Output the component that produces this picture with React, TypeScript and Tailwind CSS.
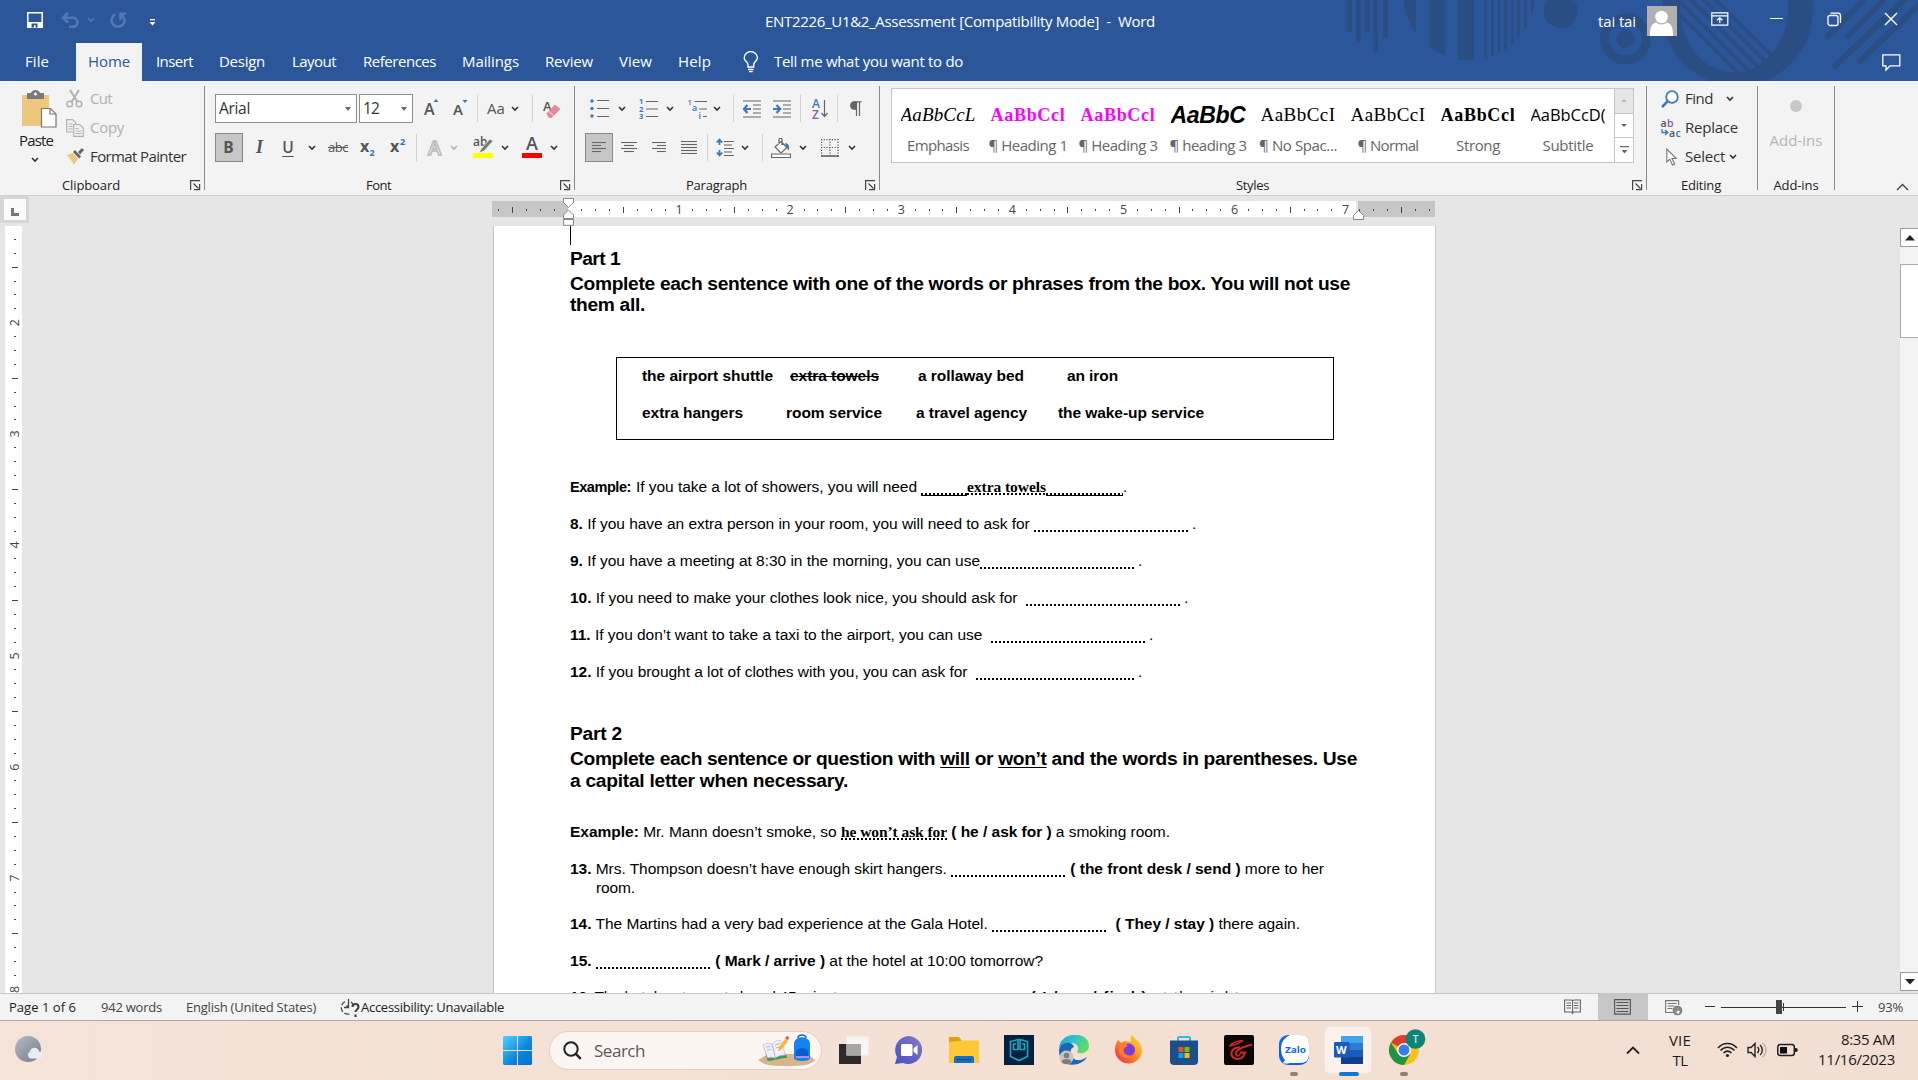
import { useLayoutEffect, useRef } from "react";
import type { ReactNode } from "react";

/** Text run whose letter spacing is adjusted so that it fills exactly `w` pixels. */
function Fit({ w, className = "", children }: { w: number; className?: string; children: ReactNode }) {
  const ref = useRef<HTMLSpanElement>(null);
  useLayoutEffect(() => {
    const el = ref.current;
    if (!el) return;
    el.style.letterSpacing = "0px";
    const natural = el.getBoundingClientRect().width;
    const count = (el.textContent || " ").length;
    el.style.letterSpacing = `${(w - natural) / count}px`;
  }, [w, children]);
  return (
    <span className={`inline-block shrink-0 whitespace-pre ${className}`} style={{ width: w }}>
      <span ref={ref}>{children}</span>
    </span>
  );
}

const Chev = ({ color = "#333" }: { color?: string }) => (
  <svg width="8" height="6" viewBox="0 0 8 6" fill="none" stroke={color} strokeWidth="1.6">
    <path d="M1 1l3 3 3-3" />
  </svg>
);

const Slot = ({ className, children }: { className: string; children: ReactNode }) => (
  <div className={`flex h-full shrink-0 items-center justify-center ${className}`}>{children}</div>
);

const Sep = () => <div className="h-[27px] w-px bg-[#d0d0d0]" />;
const GroupLine = () => <div className="mt-[5px] h-[104px] w-px shrink-0 bg-[#8a8a8a]" />;

const Launcher = () => (
  <svg width="11" height="11" viewBox="0 0 11 11" fill="none" stroke="#444" strokeWidth="1.2">
    <path d="M.6 10V.6H10M3.5 3.5l5 5M9.6 4v5.6H4" />
  </svg>
);

/* ---------- title bar ---------- */

function TitleArt() {
  return (
    <svg className="absolute right-0 top-0" width="598" height="81" viewBox="1320 0 598 81">
      <defs>
        <clipPath id="c1"><circle cx="1469" cy="-6" r="66" /></clipPath>
        <clipPath id="c2"><circle cx="1735" cy="8" r="66" /></clipPath>
      </defs>
      <g fill="#2a4d84">
        <path d="M1347 0h5v32h-5zM1356 0h5v41h-5zM1365 0h5v32h-5zM1373 0h5v52h-5zM1383 0h5v38h-5z" />
        <path clipPath="url(#c1)" d="M1400 0h16v80h-16zM1429 0h16v80h-16zM1458 0h16v80h-16zM1484 0h3v80h-3zM1491 0h2.500v80h-2.500zM1498 0h2v80h-2zM1504 0h3v80h-3zM1511 0h2.500v80h-2.500zM1517 0h3v80h-3zM1524 0h3v80h-3zM1531 0h3v80h-3z" />
        <circle cx="1560.700" cy="11" r="17" />
        <circle cx="1625.500" cy="39" r="9" />
      </g>
      <circle cx="1625.500" cy="39" r="21" fill="none" stroke="#2a4d84" strokeWidth="9" />
      <path fill="#2a4d84" fillRule="evenodd" d="M1813 10a75.500 76 0 1 1-151 0a75.500 76 0 1 1 151 0zM1788 8a52 62 0 1 0-108 0a52 62 0 1 0 108 0z" />
      <g clipPath="url(#c2)" stroke="#2a4d84" strokeWidth="4">
        <path d="M1670 -8l84 84M1685 -6l84 84M1699 -5l84 84M1711 -5l84 84M1657 -8l84 84" />
      </g>
      <g stroke="#2a4d84" strokeWidth="6">
        <path d="M1864 0l-38 38M1884 0l-38 38M1906 -2l-73 70M1928 -4l-70 67" />
      </g>
    </svg>
  );
}

function TitleBar() {
  return (
    <div className="flex h-[43px] items-start text-[15px] leading-[20px] text-white">
      <div className="flex h-[43px] w-[765px] pt-[12px]">
        <svg className="ml-[27px]" width="16" height="16" viewBox="0 0 16 16" fill="none" stroke="#fff" strokeWidth="1.500">
          <path d="M.8.8h14.400v14.400H.8z" />
          <path d="M1 10h14v5.500H1z" fill="#fff" stroke="none" />
          <path d="M4.500 11.500h6v4h-2v-2.500h-1.500v2.500h-2.500z" fill="#2b579a" stroke="none" />
        </svg>
        <svg className="ml-[18px]" width="19" height="17" viewBox="0 0 19 17" fill="none" stroke="#5178b3" strokeWidth="2.600">
          <path d="M7 1L2 5.800 7 10.500M2 5.800h10a4.500 4.500 0 0 1 0 9H8" />
        </svg>
        <div className="ml-[7px] mt-[5px]"><Chev color="#5178b3" /></div>
        <svg className="ml-[14px]" width="18" height="17" viewBox="0 0 18 17" fill="none" stroke="#5178b3" strokeWidth="2.600">
          <path d="M6 2.500a6.500 6.500 0 1 0 6 0M11.500 8V1.800H17" />
        </svg>
        <svg className="ml-[22px] mt-[7px]" width="7" height="7" viewBox="0 0 7 7" fill="#fff">
          <path d="M1 0h5v1.200H1zM.5 3h6L3.500 6.500z" />
        </svg>
      </div>
      <Fit w={390} className="mt-[11px]">{"ENT2226_U1&2_Assessment [Compatibility Mode]  -  Word"}</Fit>
      <Fit w={38} className="ml-[443px] mt-[11px]">tai tai</Fit>
      <svg className="ml-[11px] mt-[6px] bg-[#b0b0b0]" width="30" height="30" viewBox="0 0 30 30" fill="#fff">
        <circle cx="14.500" cy="11" r="6.300" />
        <path d="M3 30c0-8 1-12 6-13.500 3 2.500 8 2.500 11 0 5 1.500 6 5.500 6 13.500z" />
      </svg>
      <svg className="ml-[34px] mt-[12px]" width="18" height="14" viewBox="0 0 18 14" fill="none" stroke="#fff" strokeWidth="1.200">
        <path d="M.8.8h16v12.400H.8zM.8 3.800h16M8.800 11V6M6 8.300L8.800 5.800l2.700 2.500" />
      </svg>
      <div className="ml-[41px] mt-[18px] h-px w-[13px] bg-white" />
      <svg className="ml-[44px] mt-[12px]" width="15" height="15" viewBox="0 0 15 15" fill="none" stroke="#fff" strokeWidth="1.300">
        <rect x="1" y="3.500" width="10" height="10" rx="2" />
        <path d="M3.500 1.200H11a2.500 2.500 0 0 1 2.500 2.500V11" />
      </svg>
      <svg className="ml-[42px] mt-[12px]" width="14" height="14" viewBox="0 0 14 14" stroke="#fff" strokeWidth="1.400">
        <path d="M1 1l12 12M13 1L1 13" />
      </svg>
    </div>
  );
}

function Tabs() {
  return (
    <div className="relative flex h-[38px] text-[15px] leading-[36px] text-white">
      <Fit w={24} className="ml-[25px]">File</Fit>
      <div className="ml-[27px] w-[66px] bg-[#f3f3f3] pl-[12px] text-[#2b579a]"><Fit w={42}>Home</Fit></div>
      <Fit w={37} className="ml-[14px]">Insert</Fit>
      <Fit w={46} className="ml-[26px]">Design</Fit>
      <Fit w={44} className="ml-[27px]">Layout</Fit>
      <Fit w={73} className="ml-[27px]">References</Fit>
      <Fit w={57} className="ml-[26px]">Mailings</Fit>
      <Fit w={48} className="ml-[26px]">Review</Fit>
      <Fit w={33} className="ml-[26px]">View</Fit>
      <Fit w={33} className="ml-[26px]">Help</Fit>
      <svg className="ml-[32px] mt-[8px]" width="16" height="22" viewBox="0 0 16 22" fill="none" stroke="#fff" strokeWidth="1.400">
        <path d="M5 16v-2.500C5 11 1.200 10 1.200 7a6.500 6.300 0 0 1 13.200 0c0 3-3.700 4-3.700 6.500V16zM5 18.500h5.700M6 20.600h3.700" />
      </svg>
      <Fit w={189} className="ml-[15px]">Tell me what you want to do</Fit>
      <svg className="ml-auto mr-[17px] mt-[11px]" width="19" height="18" viewBox="0 0 19 18" fill="none" stroke="#fff" strokeWidth="1.300">
        <path d="M.8.8h17v11H8l-4 4.200v-4.200H.8z" />
      </svg>
    </div>
  );
}

/* ---------- ribbon ---------- */

function Clipboard() {
  return (
    <div className="flex w-[204px] shrink-0 flex-col">
      <div className="flex h-[91px]">
        <div className="flex w-[66px] flex-col items-start pl-[19px] pt-[9px]">
          <svg className="ml-[3px]" width="35" height="38" viewBox="0 0 35 38">
            <path d="M0 5h27v31H0z" fill="#eec77f" />
            <path d="M5 3h4c1-4 8-4 9 0h4v6H5z" fill="#7a7a7a" />
            <circle cx="13.500" cy="4" r="1.500" fill="#fff" />
            <path d="M19.500 18.500h9l5.500 5.500v13H19.500z" fill="#fff" stroke="#777" strokeWidth="1.200" />
            <path d="M28 18.500V24h6" fill="none" stroke="#777" strokeWidth="1.200" />
          </svg>
          <Fit w={34} className="mt-[2px] leading-[20px]">Paste</Fit>
          <div className="ml-[12px] mt-[7px]"><Chev /></div>
        </div>
        <div className="pt-[3px] text-[15px] leading-[29px]">
          <div className="flex h-[29px] items-center text-[#b1b1b1]">
            <svg className="mr-[7px]" width="17" height="19" viewBox="0 0 17 19" fill="none" stroke="#b1b1b1" strokeWidth="1.500">
              <path d="M4 1l7.500 12M13 1L5.500 13" strokeWidth="2" />
              <circle cx="3.700" cy="15" r="2.800" /><circle cx="13" cy="15" r="2.800" />
            </svg>
            <Fit w={22}>Cut</Fit>
          </div>
          <div className="flex h-[29px] items-center text-[#b1b1b1]">
            <svg className="mr-[6px]" width="18" height="18" viewBox="0 0 18 18" fill="#f3f3f3" stroke="#b1b1b1" strokeWidth="1.200">
              <path d="M.7.7h6l3 3V13h-9zM2.500 5h4M2.500 7.500h4M2.500 10h4" />
              <path d="M7.700 5.500h6l3.500 3.500v8.300H7.700zM9.500 9.500h3M9.500 12h6M9.500 14.500h6" />
            </svg>
            <Fit w={34}>Copy</Fit>
          </div>
          <div className="flex h-[29px] items-center text-[#333]">
            <svg className="ml-px mr-[6px]" width="17" height="17" viewBox="0 0 17 17">
              <path d="M0 7l6-2 5 6-4 5.500C5 13 2 10 0 7z" fill="#eec77f" />
              <path d="M6 4l2-2 6 6.500-2 2z" fill="#666" />
              <path d="M11 4l4-4 2 2-4 4.500z" fill="#666" />
            </svg>
            <Fit w={96}>Format Painter</Fit>
          </div>
        </div>
      </div>
      <div className="flex pt-[4px] text-[13px] leading-[18px]">
        <Fit w={58} className="ml-[62px]">Clipboard</Fit>
        <div className="ml-[70px] mt-[4px]"><Launcher /></div>
      </div>
    </div>
  );
}

const LetterA = ({ s, c = "#555", extra }: { s: number; c?: string; extra?: ReactNode }) => (
  <svg width="20" height="24" viewBox="0 0 20 24" className="overflow-visible">
    <text x="3" y="18" fontSize={s} fontWeight="600" fill={c} fontFamily="Open Sans">A</text>
    {extra}
  </svg>
);

function FontGroup() {
  return (
    <div className="flex w-[369px] shrink-0 flex-col pl-[10px]">
      <div className="mt-[13px] flex h-[29px] shrink-0">
        <div className="flex w-[142px] items-center border border-[#8f8f8f] bg-white pl-[3px] pr-[5px] text-[15.500px] text-[#333]">
          <Fit w={31}>Arial</Fit>
          <svg className="ml-auto" width="6" height="4"><path d="M0 0h6L3 4z" fill="#666" /></svg>
        </div>
        <div className="ml-[2px] flex w-[54px] items-center border border-[#8f8f8f] bg-white pl-[3px] pr-[5px] text-[15.500px] text-[#333]">
          <Fit w={16}>12</Fit>
          <svg className="ml-auto" width="6" height="4"><path d="M0 0h6L3 4z" fill="#666" /></svg>
        </div>
        <Slot className="w-[36px]"><LetterA s={16} extra={<path d="M12.500 5l2.500-3L17.500 5z" fill="#2e75b6" />} /></Slot>
        <Slot className="w-[22px]"><LetterA s={15} extra={<path d="M12.500 3l2.500 3 2.500-3z" fill="#2e75b6" />} /></Slot>
        <Slot className="w-[13px]"><Sep /></Slot>
        <Slot className="w-[24px] text-[15px] text-[#555]"><Fit w={18}>Aa</Fit></Slot>
        <Slot className="w-[14px]"><Chev /></Slot>
        <Slot className="w-[21px]"><Sep /></Slot>
        <Slot className="w-[18px]">
          <svg width="18" height="20" viewBox="0 0 18 20" className="overflow-visible">
            <text x="0" y="12" fontSize="13" fontWeight="600" fill="#555" fontFamily="Open Sans">A</text>
            <path d="M3.500 14.500L12 5.500l5.500 4.500-9 9-3-.500z" fill="#e8869a" />
            <path d="M5.500 12l5 4.500" stroke="#f3f3f3" strokeWidth="1" />
          </svg>
        </Slot>
      </div>
      <div className="mt-[10px] flex h-[29px] shrink-0 text-[16px] text-[#555]">
        <div className="flex w-[28px] items-center justify-center border border-[#8a8a8a] bg-[#c6c6c6] pr-px text-[15.500px] font-bold">B</div>
        <Slot className="w-[33px] font-['Liberation_Serif'] text-[18px] font-bold italic">I</Slot>
        <Slot className="w-[24px] text-[15.500px] font-semibold underline underline-offset-[3px]">U</Slot>
        <Slot className="w-[23px]"><Chev /></Slot>
        <Slot className="w-[30px] text-[13px] line-through"><Fit w={20}>abc</Fit></Slot>
        <Slot className="w-[30px]">
          <svg width="16" height="20" viewBox="0 0 16 20" fontFamily="Open Sans" fontWeight="700" className="overflow-visible">
            <text x="0" y="14" fontSize="16" fill="#555">x</text><text x="9.500" y="18" fontSize="9" fill="#2e75b6">2</text>
          </svg>
        </Slot>
        <Slot className="w-[30px]">
          <svg width="16" height="20" viewBox="0 0 16 20" fontFamily="Open Sans" fontWeight="700" className="overflow-visible">
            <text x="0" y="14" fontSize="16" fill="#555">x</text><text x="10" y="7" fontSize="9" fill="#2e75b6">2</text>
          </svg>
        </Slot>
        <Slot className="w-[7px]"><Sep /></Slot>
        <Slot className="w-[30px]">
          <svg width="18" height="20" viewBox="0 0 18 20" className="overflow-visible">
            <text x="2" y="17" fontSize="20" fontWeight="600" fill="#fff" stroke="#bbb" strokeWidth="1.500" fontFamily="Open Sans">A</text>
          </svg>
        </Slot>
        <Slot className="w-[8px]"><Chev color="#b1b1b1" /></Slot>
        <Slot className="ml-[10px] w-[30px]">
          <svg width="20" height="22" viewBox="0 0 20 22" className="overflow-visible">
            <text x="0" y="9" fontSize="12" fontWeight="600" fill="#555" fontFamily="Open Sans">ab</text>
            <path d="M17 2l3 2-9 10-5 2 2-4z" fill="#777" stroke="#f3f3f3" strokeWidth=".7" />
            <path d="M0 16h20v5H0z" fill="#ff0" />
          </svg>
        </Slot>
        <Slot className="w-[14px]"><Chev /></Slot>
        <Slot className="ml-[5px] w-[30px]">
          <svg width="20" height="22" viewBox="0 0 20 22" className="overflow-visible">
            <text x="4" y="13" fontSize="18" fontWeight="600" fill="#555" fontFamily="Open Sans">A</text>
            <path d="M0 16h20v5H0z" fill="#f00" />
          </svg>
        </Slot>
        <Slot className="w-[14px]"><Chev /></Slot>
      </div>
      <div className="mt-[14px] flex text-[13px] leading-[18px]">
        <Fit w={25} className="ml-[151px]">Font</Fit>
        <div className="ml-[169px] mt-[4px]"><Launcher /></div>
      </div>
    </div>
  );
}

const Lines = ({ rows, w = 18, h = 20 }: { rows: number[][]; w?: number; h?: number }) => (
  <svg width={w} height={h} viewBox={`0 0 ${w} ${h}`} stroke="#666" strokeWidth="1.100">
    {rows.map(([y, a, b], i) => <path key={i} d={`M${a} ${y + 0.5}H${b}`} />)}
  </svg>
);

function ParagraphGroup() {
  return (
    <div className="flex w-[304px] shrink-0 flex-col pl-[10px]">
      <div className="mt-[13px] flex h-[29px] shrink-0">
        <Slot className="w-[28px]">
          <svg width="19" height="19" viewBox="0 0 19 19">
            <g fill="#3e78b5"><circle cx="2" cy="2" r="1.700" /><circle cx="2" cy="9.500" r="1.700" /><circle cx="2" cy="17" r="1.700" /></g>
            <path d="M7 1.500h12M7 9.500h12M7 17.500h12" stroke="#666" strokeWidth="1.200" />
          </svg>
        </Slot>
        <Slot className="w-[17px]"><Chev /></Slot>
        <Slot className="w-[36px]">
          <svg width="19" height="20" viewBox="0 0 19 20" className="overflow-visible">
            <g fill="#3e78b5" fontSize="7.500" fontWeight="700" fontFamily="Open Sans"><text x="0" y="5">1</text><text x="0" y="12.500">2</text><text x="0" y="20">3</text></g>
            <path d="M7 2.500h12M7 10h12M7 17.500h12" stroke="#666" strokeWidth="1.200" />
          </svg>
        </Slot>
        <Slot className="w-[8px]"><Chev /></Slot>
        <Slot className="ml-[8px] w-[30px]">
          <svg width="19" height="20" viewBox="0 0 19 20" className="overflow-visible">
            <g fill="#3e78b5" fontSize="9" fontWeight="600" fontFamily="Open Sans"><text x="-.5" y="5.500" fontSize="7.500">1</text><text x="4" y="12">a</text><text x="10.500" y="19.500">i</text></g>
            <path d="M6.500 2.500h12.500M11 10h8M15 17.500h4" stroke="#666" strokeWidth="1.200" />
          </svg>
        </Slot>
        <Slot className="w-[9px]"><Chev /></Slot>
        <Slot className="ml-[5px] w-[15px]"><Sep /></Slot>
        <Slot className="w-[22px]">
          <svg width="18" height="18" viewBox="0 0 18 18"><path d="M0 1h18M10 5h8M10 9h8M10 13h8M0 17h18" stroke="#666" strokeWidth="1.200" /><path d="M8 9H1M4.500 5L.8 9l3.700 4" fill="none" stroke="#3e78b5" strokeWidth="2.200" /></svg>
        </Slot>
        <Slot className="ml-[8px] w-[22px]">
          <svg width="18" height="18" viewBox="0 0 18 18"><path d="M0 1h18M10 5h8M10 9h8M10 13h8M0 17h18" stroke="#666" strokeWidth="1.200" /><path d="M0 9h7M3.500 5l3.700 4-3.700 4" fill="none" stroke="#3e78b5" strokeWidth="2.200" /></svg>
        </Slot>
        <Slot className="w-[15px]"><Sep /></Slot>
        <Slot className="w-[24px]">
          <svg width="17" height="20" viewBox="0 0 17 20" className="overflow-visible" fontFamily="Open Sans" fontWeight="600">
            <text x="0" y="9" fontSize="12" fill="#3e78b5">A</text><text x="0" y="19.500" fontSize="12" fill="#8b5aa8">Z</text>
            <path d="M12.500 1v16M9.500 14l3 3.500 3-3.500" fill="none" stroke="#666" strokeWidth="1.200" />
          </svg>
        </Slot>
        <Slot className="w-[11px]"><Sep /></Slot>
        <Slot className="w-[25px]">
          <svg width="12" height="16" viewBox="0 0 12 16" fill="none" stroke="#666" strokeWidth="1.200"><path d="M11.500.8H4.500M6.500 1v14M9.500 1v14" /><path d="M6 .8H4a3.300 3.700 0 0 0 0 7.400h2z" fill="#666" /></svg>
        </Slot>
      </div>
      <div className="mt-[10px] flex h-[29px] shrink-0">
        <div className="flex w-[28px] items-center justify-center border border-[#8a8a8a] bg-[#c6c6c6]">
          <Lines w={14} h={11} rows={[[0, 0, 14], [3, 0, 9], [6, 0, 14], [9, 0, 9]]} />
        </div>
        <Slot className="w-[32px]"><Lines w={16} h={11} rows={[[0, 0, 16], [3, 3, 13], [6, 0, 16], [9, 3, 13]]} /></Slot>
        <Slot className="w-[28px]"><Lines w={14} h={11} rows={[[0, 0, 14], [3, 5, 14], [6, 0, 14], [9, 5, 14]]} /></Slot>
        <Slot className="w-[32px]"><Lines w={16} h={13} rows={[[0, 0, 16], [3, 0, 16], [6, 0, 16], [9, 0, 16], [12, 0, 16]]} /></Slot>
        <Slot className="w-[4px]"><Sep /></Slot>
        <Slot className="w-[32px]">
          <svg width="18" height="19" viewBox="0 0 18 19"><path d="M8 3.500h10M8 7h8M8 10.500h10M8 14h8M8 17.500h10" stroke="#666" strokeWidth="1.200" /><path d="M3.500 2v5M3.500 12v5M.8 4.500L3.500 1.500l2.700 3M.8 14.500l2.700 3 2.700-3" fill="none" stroke="#3e78b5" strokeWidth="1.800" /></svg>
        </Slot>
        <Slot className="w-[8px]"><Chev /></Slot>
        <Slot className="ml-[6px] w-[14px]"><Sep /></Slot>
        <Slot className="w-[24px]">
          <svg width="20" height="20" viewBox="0 0 20 20" fill="none" stroke="#666" strokeWidth="1.200"><path d="M4 9l6-5.500 6 6L10 15zM8 6V1.500c0-1.500 3-1.500 3 0V7" fill="#fff" /><path d="M14 5c4 .5 4.500 3 4 8-1-2-2-3-3-3.500z" fill="#3e78b5" stroke="none" /><path d="M.5 16h19v3.500H.5z" fill="#fff" /></svg>
        </Slot>
        <Slot className="w-[20px]"><Chev /></Slot>
        <Slot className="w-[33px]">
          <svg width="18" height="18" viewBox="0 0 18 18" stroke="#555" strokeWidth="1.200"><path d="M.6 0v17M17 0v17M9 0v17M0 .6h17M0 8.500h17" strokeDasharray="1.200 1.500" /><path d="M0 17h18" strokeWidth="1.500" /></svg>
        </Slot>
        <Slot className="w-[12px]"><Chev /></Slot>
      </div>
      <div className="mt-[14px] flex text-[13px] leading-[18px]">
        <Fit w={61} className="ml-[101px]">Paragraph</Fit>
        <div className="ml-[118px] mt-[4px]"><Launcher /></div>
      </div>
    </div>
  );
}

const styleItems = [
  { p: "AaBbCcL", c: "font-['Liberation_Serif'] text-[19px] italic text-black", l: "Emphasis", w: 62 },
  { p: "AaBbCcl", c: "font-['Liberation_Serif'] text-[18px] font-bold text-[#ff00ff]", l: "¶ Heading 1", w: 79 },
  { p: "AaBbCcl", c: "font-['Liberation_Serif'] text-[18px] font-bold text-[#ff00ff]", l: "¶ Heading 3", w: 79 },
  { p: "AaBbC", c: "font-['Liberation_Sans'] text-[23px] font-bold italic text-black", l: "¶ heading 3", w: 77 },
  { p: "AaBbCcI", c: "font-['Liberation_Serif'] text-[19px] text-black", l: "¶ No Spac...", w: 78 },
  { p: "AaBbCcI", c: "font-['Liberation_Serif'] text-[19px] text-black", l: "¶ Normal", w: 61 },
  { p: "AaBbCcl", c: "font-['Liberation_Serif'] text-[18px] font-bold text-black", l: "Strong", w: 44 },
  { p: "AaBbCcD(", c: "font-['Open_Sans'] text-[16.500px] text-black", l: "Subtitle", w: 51 },
];

function StylesGroup() {
  return (
    <div className="flex w-[766px] shrink-0 flex-col pl-[11px]">
      <div className="mt-[7px] flex h-[75px] w-[743px] shrink-0 border border-[#c6c6c6] bg-white">
        <div className="flex flex-1 pl-px">
          {styleItems.map((s, i) => (
            <div key={i} className="flex w-[90px] shrink-0 flex-col items-center">
              <div className="mt-[12px] h-[28px] w-[75px] overflow-hidden leading-[28px]">
                <Fit w={75} className={s.c}>{s.p}</Fit>
              </div>
              <div className="mt-[6px] text-[15px] leading-[20px] text-[#666]"><Fit w={s.w}>{s.l}</Fit></div>
            </div>
          ))}
        </div>
        <div className="flex w-[19px] flex-col border-l border-[#c6c6c6]">
          <div className="flex flex-1 items-center justify-center border-b border-[#c6c6c6] bg-[#e6e6e6]"><svg width="6" height="3"><path d="M0 3h6L3 0z" fill="#b5b5b5" /></svg></div>
          <div className="flex flex-1 items-center justify-center border-b border-[#c6c6c6]"><svg width="6" height="3"><path d="M0 0h6L3 3z" fill="#666" /></svg></div>
          <div className="flex flex-1 items-center justify-center"><svg width="9" height="8"><path d="M0 0h9v1.200H0zM1.500 4h6l-3 3.500z" fill="#666" /></svg></div>
        </div>
      </div>
      <div className="mt-[13px] flex text-[13px] leading-[18px]">
        <Fit w={33} className="ml-[345px]">Styles</Fit>
        <div className="ml-[363px] mt-[4px]"><Launcher /></div>
      </div>
    </div>
  );
}

function EditingGroup() {
  return (
    <div className="flex w-[110px] shrink-0 flex-col pl-[14px] text-[#333]">
      <div className="mt-[3px] flex h-[29px] items-center">
        <svg className="mr-[6px]" width="18" height="18" viewBox="0 0 18 18" fill="none" stroke="#3e78b5"><circle cx="11" cy="7" r="5.800" strokeWidth="1.800" fill="#fff" /><path d="M6.500 11.500L1 17" strokeWidth="2.500" /></svg>
        <Fit w={28}>Find</Fit>
        <div className="ml-[13px]"><Chev /></div>
      </div>
      <div className="flex h-[29px] items-center">
        <svg className="mr-[4px] overflow-visible" width="20" height="18" viewBox="0 0 20 18" fontSize="10.500" fontWeight="600" fontFamily="Open Sans">
          <text x="-.5" y="7.500" fill="#555">a</text><text x="6" y="7.500" fill="#8b5aa8">b</text><text x="8" y="17.500" fill="#555">a</text><text x="14.500" y="17.500" fill="#3e78b5">c</text>
          <path d="M1 10v3.500h5.500M4 11l3 2.500L4 16" fill="none" stroke="#3e78b5" strokeWidth="1.300" />
        </svg>
        <Fit w={53}>Replace</Fit>
      </div>
      <div className="flex h-[29px] items-center">
        <svg className="ml-[5px] mr-[8px]" width="11" height="18" viewBox="0 0 11 18" fill="#fff" stroke="#777" strokeWidth="1.100"><path d="M.8 1v13l3-2.800 2.700 5.800 2.200-1-2.700-5.500h4.300z" /></svg>
        <Fit w={40}>Select</Fit>
        <div className="ml-[4px]"><Chev /></div>
      </div>
      <Fit w={40} className="ml-[20px] mt-[5px] text-[13px] leading-[18px] text-[#222]">Editing</Fit>
    </div>
  );
}

function Ribbon() {
  return (
    <div className="flex h-[115px] border-b border-[#d0d0d0] bg-[#f3f3f3] text-[15px] text-[#222]">
      <Clipboard />
      <GroupLine />
      <FontGroup />
      <GroupLine />
      <ParagraphGroup />
      <GroupLine />
      <StylesGroup />
      <GroupLine />
      <EditingGroup />
      <GroupLine />
      <div className="flex w-[76px] flex-col items-center">
        <div className="mt-[19px] h-[12px] w-[12px] shrink-0 rounded-full bg-[#cac6ca]" />
        <Fit w={53} className="mt-[18px] leading-[20px] text-[#b5b5b5]">Add-ins</Fit>
        <Fit w={45} className="mt-[26px] text-[13px] leading-[18px]">Add-ins</Fit>
      </div>
      <GroupLine />
      <svg className="ml-auto mr-[9px] mt-[102px]" width="13" height="8" viewBox="0 0 13 8" fill="none" stroke="#444" strokeWidth="1.400"><path d="M1 7l5.500-5.500L12 7" /></svg>
    </div>
  );
}

/* ---------- rulers ---------- */

const INCH = 111.1;

function HRuler() {
  const ticks: ReactNode[] = [];
  for (let i = -5; i <= 62; i++) {
    if (i === 0) continue;
    const x = 76 + (i * INCH) / 8;
    if (i % 8 === 0 && i > 0) ticks.push(<text key={i} x={x} y="13" textAnchor="middle" fontSize="12.500" fill="#444" fontFamily="Open Sans">{i / 8}</text>);
    else if (i % 4 === 0) ticks.push(<path key={i} d={`M${Math.floor(x)} 6h1v6h-1z`} fill="#444" />);
    else ticks.push(<path key={i} d={`M${Math.floor(x)} 8h1v2h-1z`} fill="#444" />);
  }
  return (
    <svg className="ml-[462px] mt-[2px] shrink-0" width="950" height="28" viewBox="0 -3 950 28">
      <path d="M0 0h943v16H0z" fill="#c6c6c6" />
      <path d="M76 0h788v16H76z" fill="#fff" />
      <path d="M864 0h2v16h-2z" fill="#e6e6e6" />
      {ticks}
      <g fill="#fff" stroke="#888" strokeWidth="1">
        <path d="M71.500-2.500h10v4l-5 5-5-5zM71.500 17.500v-3.500l5-5 5 5v3.500zM71.500 18.500h10v5.800h-10z" />
        <path d="M861.500 18.500v-4l5-5 5 5v4z" />
      </g>
    </svg>
  );
}

function VRuler() {
  const ticks: ReactNode[] = [];
  for (let i = 9; i <= 64; i++) {
    const y = 100.5 - 226 + (i * INCH) / 8;
    if (y < 3) continue;
    if (i % 8 === 0) ticks.push(<text key={i} transform={`translate(14 ${y}) rotate(-90)`} textAnchor="middle" fontSize="12.500" fill="#444" fontFamily="Open Sans">{i / 8}</text>);
    else if (i % 4 === 0) ticks.push(<path key={i} d={`M7 ${Math.floor(y)}h6v1h-6z`} fill="#444" />);
    else ticks.push(<path key={i} d={`M9 ${Math.floor(y)}h2v1h-2z`} fill="#444" />);
  }
  return <svg className="ml-[5px] mt-[3px] bg-white" width="17" height="767" viewBox="0 0 17 767">{ticks}</svg>;
}

/* ---------- document ---------- */

const DOTS = "bg-[repeating-linear-gradient(90deg,#000_0_2px,transparent_2px_4px)]";

const Blank = ({ w, solid }: { w: number; solid?: boolean }) => (
  <span className={`mt-[14px] flex h-[4px] shrink-0 flex-col ${solid ? "border-b border-black" : ""}`} style={{ width: w }}>
    <span className={`mt-px h-[2px] w-full ${DOTS}`} />
  </span>
);

const Answer = ({ w, children }: { w: number; children: string }) => (
  <span className="relative h-[18px] shrink-0 font-['Liberation_Serif'] font-bold" style={{ width: w }}>
    <Fit w={w}>{children}</Fit>
    <span className={`absolute bottom-px left-0 h-[2px] w-full ${DOTS}`} />
  </span>
);

const Line = ({ className = "mt-[19px]", children }: { className?: string; children: ReactNode }) => (
  <div className={`flex h-[18px] shrink-0 text-[15.500px] leading-[18px] ${className}`}>{children}</div>
);

function Page() {
  return (
    <div className="relative ml-[463px] flex h-[767px] w-[943px] flex-col overflow-hidden border-x border-[#c6c6c6] bg-white pl-[76px] font-['Liberation_Sans'] text-[19.200px] leading-[21px] text-black">
      <div className="absolute left-[76px] top-0 h-[19px] w-px bg-black" />
      <Fit w={50} className="mt-[22px] font-bold">Part 1</Fit>
      <Fit w={780} className="mt-[4px] font-bold">Complete each sentence with one of the words or phrases from the box. You will not use</Fit>
      <Fit w={75} className="font-bold">them all.</Fit>
      <div className="ml-[46px] mt-[42px] flex h-[83px] w-[718px] shrink-0 flex-col border border-black pl-[25px] text-[15.500px] font-bold">
        <div className="mt-[9px] flex h-[18px] leading-[18px]">
          <Fit w={131}>the airport shuttle</Fit>
          <Fit w={89} className="ml-[17px] line-through">extra towels</Fit>
          <Fit w={106} className="ml-[39px]">a rollaway bed</Fit>
          <Fit w={51} className="ml-[43px]">an iron</Fit>
        </div>
        <div className="mt-[19px] flex h-[18px] leading-[18px]">
          <Fit w={101}>extra hangers</Fit>
          <Fit w={96} className="ml-[43px]">room service</Fit>
          <Fit w={111} className="ml-[34px]">a travel agency</Fit>
          <Fit w={146} className="ml-[31px]">the wake-up service</Fit>
        </div>
      </div>
      <Line className="mt-[38px]">
        <Fit w={61} className="text-[14.500px] font-bold">Example:</Fit>
        <Fit w={281} className="ml-[5px]">If you take a lot of showers, you will need</Fit>
        <span className="w-[4px]" />
        <Blank w={46} solid />
        <Answer w={79}>extra towels</Answer>
        <Blank w={77} solid />
        <span>.</span>
      </Line>
      <Line><Fit w={464}><b>8.</b>{" If you have an extra person in your room, you will need to ask for "}</Fit><Blank w={154} /><span className="ml-[4px]">.</span></Line>
      <Line><Fit w={410}><b>9.</b>{" If you have a meeting at 8:30 in the morning, you can use"}</Fit><Blank w={154} /><span className="ml-[4px]">.</span></Line>
      <Line><Fit w={456}><b>10.</b>{" If you need to make your clothes look nice, you should ask for  "}</Fit><Blank w={154} /><span className="ml-[4px]">.</span></Line>
      <Line><Fit w={421}><b>11.</b>{" If you don’t want to take a taxi to the airport, you can use  "}</Fit><Blank w={154} /><span className="ml-[4px]">.</span></Line>
      <Line><Fit w={406}><b>12.</b>{" If you brought a lot of clothes with you, you can ask for  "}</Fit><Blank w={158} /><span className="ml-[4px]">.</span></Line>
      <Fit w={52} className="mt-[42px] font-bold">Part 2</Fit>
      <Fit w={787} className="mt-[4px] font-bold">Complete each sentence or question with <u className="underline-offset-2">will</u> or <u className="underline-offset-2">won’t</u> and the words in parentheses. Use</Fit>
      <Fit w={278} className="mt-px font-bold">a capital letter when necessary.</Fit>
      <Line className="mt-[32px]">
        <Fit w={271}><b>Example:</b>{" Mr. Mann doesn’t smoke, so "}</Fit>
        <Answer w={106}>he won’t ask for</Answer>
        <Fit w={223}><b>{" ( he / ask for )"}</b> a smoking room.</Fit>
      </Line>
      <Line>
        <Fit w={381}><b>13.</b>{" Mrs. Thompson doesn’t have enough skirt hangers. "}</Fit>
        <Blank w={115} />
        <Fit w={258}><b>{" ( the front desk / send )"}</b> more to her</Fit>
      </Line>
      <Line className="mt-px"><Fit w={39} className="ml-[26px]">room.</Fit></Line>
      <Line className="mt-[18px]">
        <Fit w={422}><b>14.</b>{" The Martins had a very bad experience at the Gala Hotel. "}</Fit>
        <Blank w={115} />
        <Fit w={193}><b>{"  ( They / stay )"}</b> there again.</Fit>
      </Line>
      <Line>
        <Fit w={26}><b>15.</b>{" "}</Fit>
        <Blank w={115} />
        <Fit w={332}><b>{" ( Mark / arrive )"}</b> at the hotel at 10:00 tomorrow?</Fit>
      </Line>
      <Line className="mt-[18px]">
        <Fit w={340}><b>16.</b>{" The hotel restaurant closed 45 minutes ago, so "}</Fit>
        <Blank w={115} />
        <Fit w={215}><b>{" ( I / we / find )"}</b> at the right</Fit>
      </Line>
    </div>
  );
}

function Workspace() {
  return (
    <div className="flex h-[797px] overflow-hidden bg-[#e6e6e6]">
      <div className="w-[30px] shrink-0">
        <div className="flex h-[27px] w-[29px] items-center justify-center bg-[#d6d6d6]">
          <div className="flex h-[21px] w-[22px] items-end justify-center bg-[#fbfbfb] pb-[4px]">
            <svg width="8" height="8"><path d="M0 0h3v5h5v3H0z" fill="#777" /></svg>
          </div>
        </div>
        <VRuler />
      </div>
      <div className="flex w-[1870px] flex-col">
        <HRuler />
        <Page />
      </div>
      <div className="mt-[32px] flex h-[763px] w-[18px] shrink-0 flex-col bg-[#f3f3f3]">
        <div className="flex h-[19px] items-center justify-center border border-r-0 border-[#999] bg-white"><svg width="10" height="6"><path d="M0 5.500h10L5 0z" fill="#222" /></svg></div>
        <div className="mt-[17px] h-[74px] border border-r-0 border-[#aaa] bg-white" />
        <div className="mt-auto flex h-[19px] items-center justify-center border border-r-0 border-[#999] bg-white"><svg width="10" height="6"><path d="M0 0h10L5 5.500z" fill="#222" /></svg></div>
      </div>
    </div>
  );
}

/* ---------- status bar ---------- */

function StatusBar() {
  return (
    <div className="flex h-[28px] border-y border-b-[#b5a8a2] border-t-[#c6c6c6] bg-[#f3f3f3] text-[13px] leading-[27px] text-[#444]">
      <Fit w={67} className="ml-[9px] text-[#222]">Page 1 of 6</Fit>
      <Fit w={61} className="ml-[25px]">942 words</Fit>
      <Fit w={130} className="ml-[24px]">English (United States)</Fit>
      <svg className="ml-[24px] mt-[5px]" width="20" height="18" viewBox="0 0 20 18" fill="none" stroke="#444" strokeWidth="1.300">
        <path d="M5 2.500a6.500 6.500 0 1 0 6 12" strokeDasharray="5 2" /><path d="M8.500 0v8.500H4M8.500 8.500l-2-2M11 3l2 2" />
        <path d="M12.500 8c0-4 6-4 6 0 0 2.500-3 2.500-3 5M15.500 15.500V18" strokeWidth="2.200" />
      </svg>
      <Fit w={143} className="ml-px text-[#222]">Accessibility: Unavailable</Fit>
      <div className="ml-auto flex">
        <svg className="mt-[5px]" width="17" height="16" viewBox="0 0 17 16" fill="none" stroke="#666" strokeWidth="1.100"><path d="M.6 1h7l1 1 1-1h6.800v12H9.600l-1 1.500-1-1.500h-7zM8.600 2v12M2.500 4H7M2.500 6.500H7M2.500 9H7M10 4h4.500M10 6.500h4.500M10 9h4.500" /></svg>
        <div className="ml-[17px] w-[50px] bg-[#c6c6c6]">
          <svg className="ml-[16px] mt-[5px]" width="17" height="16" viewBox="0 0 17 16" fill="none" stroke="#555" strokeWidth="1.100"><path d="M.6.6h15.800v14.500H.6zM2.500 3.500h12M2.500 6.500h12M2.500 9.500h12M2.500 12.500h12" /></svg>
        </div>
        <svg className="ml-[17px] mt-[6px]" width="18" height="16" viewBox="0 0 18 16" fill="none" stroke="#777" strokeWidth="1.100"><path d="M8 12.500H.6V.6h13V5M2.500 3.500h9M2.500 6h7M2.500 8.500h5" /><circle cx="12.500" cy="10.500" r="4.300" fill="#8a8a8a" /><path d="M11 12.500l2-2 2 .5-1.500 3z" fill="#f3f3f3" stroke="none" /></svg>
        <div className="ml-[22px] mt-[12px] h-px w-[10px] bg-[#333]" />
        <div className="ml-[6px] mt-[6px] flex h-[14px] w-[125px] items-center">
          <div className="h-px w-[55px] bg-[#333]" />
          <div className="h-[14px] w-[6px] bg-[#444]" />
          <div className="h-px w-px bg-[#333]" />
          <div className="h-[8px] w-px bg-[#333]" />
          <div className="h-px flex-1 bg-[#333]" />
        </div>
        <svg className="ml-[6px] mt-[7px]" width="11" height="11" stroke="#333"><path d="M0 5.500h11M5.500 0v11" /></svg>
        <Fit w={25} className="ml-[15px] mr-[15px]">93%</Fit>
      </div>
    </div>
  );
}

/* ---------- taskbar ---------- */

const App55 = ({ children, className = "" }: { children: ReactNode; className?: string }) => (
  <div className={`relative flex h-[58px] w-[55px] shrink-0 justify-center pt-[14px] ${className}`}>{children}</div>
);

function Taskbar() {
  return (
    <div className="flex h-[59px] bg-[linear-gradient(90deg,#f5e2d8,#f4e0d3_60%,#f2dfd3)]">
      <div className="w-[503px] shrink-0 pl-[15px] pt-[15px]">
        <svg width="29" height="28" viewBox="0 0 29 28">
          <defs>
            <linearGradient id="moon" x1="0" y1="0" x2="1" y2="1"><stop offset="0" stopColor="#b5bcc6" /><stop offset="1" stopColor="#727b88" /></linearGradient>
          </defs>
          <circle cx="13" cy="13" r="13" fill="url(#moon)" />
          <path d="M15 22.500a4 4 0 0 1 0-7c1-5 8-5 9 0 5 0 5 7 0 7z" fill="#e8edf3" />
        </svg>
      </div>
      <svg className="mt-[15px] shrink-0" width="29" height="29" viewBox="0 0 29 29">
        <defs><linearGradient id="win" x1="0" y1="0" x2="1" y2="1"><stop offset="0" stopColor="#4fd0ff" /><stop offset=".6" stopColor="#0a84dc" /><stop offset="1" stopColor="#0070cf" /></linearGradient></defs>
        <path d="M1 0h13v14H0V1zM15 0h13l1 1v13H15zM0 15h14v14H1l-1-1zM15 15h14v13l-1 1H15z" fill="url(#win)" />
      </svg>
      <div className="ml-[17px] mt-[10px] flex h-[39px] w-[273px] shrink-0 items-center rounded-full border border-[#e3cfc4] bg-[#fcf6f2] pl-[13px]">
        <svg width="19" height="19" viewBox="0 0 19 19" fill="none" stroke="#222"><circle cx="8" cy="8" r="6.700" strokeWidth="2" /><path d="M12.800 12.800l5 5" strokeWidth="2.400" /></svg>
        <Fit w={51} className="ml-[12px] text-[17px] text-[#5a5a5a]">Search</Fit>
        <svg className="ml-auto mr-[6px]" width="57" height="34" viewBox="0 0 57 34">
          <path d="M0 26l10-6h40l7 6c-4 5-12 6-28 6S6 31 0 26z" fill="#d9b48a" />
          <path d="M6 11l3 15q1 1 3 1c6-1 10-3 17-3l-1-4z" fill="#3f9a54" />
          <path d="M5 11c3-2 7-2 9-1 3-3 6-4 9-3.500L27.500 21c-4 0-8 1-10 3-3-1-6-1-8 0z" fill="#f2eef8" stroke="#b9b3c9" strokeWidth=".6" />
          <path d="M14 10l3.500 14M8 13l4-.5M9 16l4-.5M17 11l5-1.500M18 14l5-1.500" stroke="#b9b3c9" />
          <path d="M27 5l3 2-7 9-3 1 1-4z" fill="#f8b43a" /><path d="M27 4l3 2.500L31 3l-2-1z" fill="#e5533c" />
          <path d="M40 4c0-4 8-4 8 0" fill="none" stroke="#1668d0" strokeWidth="1.600" />
          <path d="M36 10c0-9 16-9 16 0v14c0 4-16 4-16 0z" fill="#1483f2" />
          <path d="M38 18c0-5 12-5 12 0v6H38z" fill="#0a5bd0" /><path d="M38 22h13v2H38z" fill="#b58cf0" />
        </svg>
      </div>
      <App55 className="ml-[4px]">
        <svg width="31" height="30" viewBox="0 0 31 30"><path d="M1 9h22v20H1z" fill="#2b2a29" /><path d="M8.500 1.500h22v19h-22z" fill="#f7f7f7" fillOpacity=".93" /><path d="M8.500 9H23v11.500H8.500z" fill="#a9a6a4" /></svg>
      </App55>
      <App55>
        <svg width="30" height="30" viewBox="0 0 30 30"><defs><linearGradient id="ch" x1="1" y1="0" x2="0" y2="1"><stop offset="0" stopColor="#8a7bc0" /><stop offset=".5" stopColor="#6464c8" /><stop offset="1" stopColor="#4a50bf" /></linearGradient></defs><path d="M15 1a14 14 0 1 1-6 27l-8 1 2-7A14 14 0 0 1 15 1z" fill="url(#ch)" /><rect x="7" y="9" width="11.500" height="12" rx="1.500" fill="#fff" /><path d="M19.500 13.500L23.500 10v10l-4-3.500z" fill="#fff" /></svg>
      </App55>
      <App55>
        <svg width="30" height="30" viewBox="0 0 30 30"><path d="M0 3c0-1 0-1 1-1h9l3 4v3H0z" fill="#e0a008" /><path d="M0 7l13-1.500h17V28H0z" fill="#fdc935" /><path d="M5 28v-5q0-2 2-2h16q2 0 2 2v5z" fill="#1272c4" /><path d="M8 24h14v1.200H8z" fill="#0a4d8e" /></svg>
      </App55>
      <App55>
        <svg width="30" height="30" viewBox="0 0 30 30"><path d="M0 0h30v30H0z" fill="#03213f" /><g fill="none" stroke="#19a7c4" strokeWidth="1.600"><path d="M6.500 15V6.500L14 4.500v10H9.500V9H12M23.500 15V6.500L16 4.500v10h4.500V9H18M6.500 14v7.500L15 25.500l8.500-4V14" /></g></svg>
      </App55>
      <App55>
        <svg width="30" height="30" viewBox="0 0 30 30"><defs><linearGradient id="ed" x1="0" y1="0" x2="1" y2=".4"><stop offset="0" stopColor="#1f9fdc" /><stop offset=".5" stopColor="#2fc0d0" /><stop offset="1" stopColor="#63dc64" /></linearGradient></defs><path d="M0 14C0-4 30-5 30 11c0 7-9 9-12 6 3-4 0-9-6-9C5 8 1 11 0 14z" fill="url(#ed)" /><path d="M0 15C2 6 14 6 15 12c-6 2-4 12 3 13 4 .6 7-1 10-3-4 9-28 14-28-7z" fill="#1567b8" /><circle cx="7.500" cy="22.500" r="7" fill="#c9c5c2" /><circle cx="7.500" cy="20.500" r="2.800" fill="#807c7a" /><path d="M2.500 27c0-4 10-4 10 0-3 3-7 3-10 0z" fill="#807c7a" /></svg>
      </App55>
      <App55>
        <svg width="29" height="30" viewBox="0 0 29 30"><defs><linearGradient id="ff" x1="1" y1="0" x2="0" y2="1"><stop offset="0" stopColor="#ffe83c" /><stop offset=".5" stopColor="#ff8a1f" /><stop offset="1" stopColor="#e6205c" /></linearGradient></defs><path d="M4 5l3 3 4-2 6 1c-1-3 0-6 1-7 3 4 10 7 10 15a13.500 13.500 0 0 1-27 0c0-4 1-7 3-10z" fill="url(#ff)" /><circle cx="14.500" cy="15" r="6.500" fill="#7a3ee0" /><path d="M5 8c4-1 7 0 9 3-3 1-5 3-4 6 1 3 5 4 8 3-3 5-12 4-13-4z" fill="#ff7a2a" /></svg>
      </App55>
      <App55>
        <svg width="30" height="30" viewBox="0 0 30 30"><path d="M9 6V2.500Q9 2 10 2h10q1 0 1 .5V6" fill="none" stroke="#35b5ee" strokeWidth="2" /><path d="M1 5.500h28V26q0 4-4 4H5q-4 0-4-4z" fill="#1a4f8c" /><path d="M9.500 12h5v5h-5z" fill="#f25022" /><path d="M15.500 12h5v5h-5z" fill="#7fba00" /><path d="M9.500 18h5v5h-5z" fill="#00a4ef" /><path d="M15.500 18h5v5h-5z" fill="#ffb900" /></svg>
      </App55>
      <App55>
        <svg width="30" height="30" viewBox="0 0 30 30"><rect width="30" height="30" rx="2" fill="#0a0707" /><g fill="none" stroke="#d8232a"><path d="M5.500 11.500C8 7.500 12 6 19 5.500c-3 1.500-5 4-12 5" strokeWidth="1.600" /><path d="M16 12.500C9 12 6 17 8 21c2.500 4 9 4 11.500 0l1.500-3.500h-5" strokeWidth="2" /><path d="M12 19.500c-1-5 7-7.500 16-10" strokeWidth="2" /><path d="M12 19c0 3 4 2 4.500-1" strokeWidth="1.500" /></g></svg>
      </App55>
      <App55>
        <svg width="30" height="30" viewBox="0 0 30 30"><rect width="30" height="30" rx="9" fill="#0a63ee" /><path d="M11 0h10q9 0 9 9v10q0 9-9 9H11q-4 1-7 0l2-3q-4-4-4-12Q2 4 11 0z" fill="#fff" /><text x="6" y="18" fontSize="9.500" fontWeight="700" fill="#1266ee" fontFamily="Open Sans" textLength="21" lengthAdjust="spacingAndGlyphs">Zalo</text></svg>
        <span className="absolute bottom-[3px] h-[4px] w-[8px] rounded-full bg-[#8c817b]" />
      </App55>
      <App55>
        <span className="absolute left-[3px] top-[5px] h-[48px] w-[48px] rounded-[5px] border border-[#f0e3dc] bg-[#faf1ec]" />
        <svg className="relative" width="30" height="30" viewBox="0 0 30 30"><path d="M7 1h22v7H7z" fill="#41a5ee" /><path d="M7 8h22v7H7z" fill="#2b7cd3" /><path d="M7 15h22v7H7z" fill="#185abd" /><path d="M7 22h22v7H7z" fill="#103f91" /><rect y="7" width="15.500" height="15.500" rx="1.200" fill="#185abd" /><text x="2" y="19" fontSize="11" fontWeight="700" fill="#fff" fontFamily="Open Sans">W</text></svg>
        <span className="absolute bottom-[3px] h-[4px] w-[20px] rounded-full bg-[#0f7ad4]" />
      </App55>
      <App55>
        <svg className="overflow-visible" width="30" height="30" viewBox="0 0 30 30"><circle cx="15" cy="15" r="15" fill="#fbc116" /><path d="M15 15L2 7.500A15 15 0 0 1 28 7.500L15 8z" fill="#e33b2e" /><path d="M2 7.500A15 15 0 0 0 15 30l6.500-11.500L9 18.500z" fill="#229342" /><circle cx="15" cy="15" r="7" fill="#fff" /><circle cx="15" cy="15" r="5.500" fill="#3b7ded" /><circle cx="26.500" cy="4" r="9.800" fill="#0c8577" /><text x="26.500" y="8" fontSize="11" fontWeight="600" textAnchor="middle" fill="#cfe8e4" fontFamily="Open Sans">T</text></svg>
        <span className="absolute bottom-[3px] h-[4px] w-[8px] rounded-full bg-[#8c817b]" />
      </App55>
      <div className="ml-auto mr-[23px] flex text-[15px] leading-[20px] text-[#1a1a1a]">
        <svg className="mr-[29px] mt-[25px]" width="14" height="9" viewBox="0 0 14 9" fill="none" stroke="#222" strokeWidth="1.800"><path d="M1 7.500l6-6 6 6" /></svg>
        <div className="mr-[26px] flex w-[22px] flex-col items-center pt-[9px]"><Fit w={22}>VIE</Fit><Fit w={15}>TL</Fit></div>
        <svg className="mr-[9px] mt-[21px]" width="21" height="16" viewBox="0 0 21 16" fill="none" stroke="#222" strokeWidth="1.500"><path d="M1 6c5-6 14-6 19 0M3.500 8.500c4-4.500 10-4.500 14 0M6.500 11c2.500-2.500 5.500-2.500 8 0" /><circle cx="10.500" cy="13.500" r="1.600" fill="#222" stroke="none" /></svg>
        <svg className="mr-[9px] mt-[21px]" width="21" height="16" viewBox="0 0 21 16" fill="none" stroke="#222" strokeWidth="1.400"><path d="M1 5.500h3L8 1.500v13l-4-4H1zM10.500 5c1.500 1.500 1.500 4 0 6M13 3c3 2.500 3 7.500 0 10" /><path d="M15.500 1c4.500 3.500 4.500 10.500 0 14" stroke="#b9aaa2" /></svg>
        <svg className="mr-[20px] mt-[22px]" width="21" height="14" viewBox="0 0 21 14"><rect x=".8" y="1.500" width="16.500" height="11" rx="2.500" fill="none" stroke="#222" strokeWidth="1.500" /><path d="M3 4h7v6.500H3z" fill="#111" /><path d="M18 5l2.500.5v3L18 9z" fill="#111" /></svg>
        <div className="flex flex-col items-end pt-[8px]"><Fit w={54}>8:35 AM</Fit><Fit w={77}>11/16/2023</Fit></div>
      </div>
    </div>
  );
}

export default function App() {
  return (
    <div className="flex h-[1080px] w-[1918px] flex-col overflow-hidden font-['Open_Sans',sans-serif]">
      <header className="relative h-[81px] shrink-0 bg-[#2b579a]">
        <TitleArt />
        <div className="relative">
          <TitleBar />
          <Tabs />
        </div>
      </header>
      <Ribbon />
      <Workspace />
      <StatusBar />
      <Taskbar />
    </div>
  );
}
